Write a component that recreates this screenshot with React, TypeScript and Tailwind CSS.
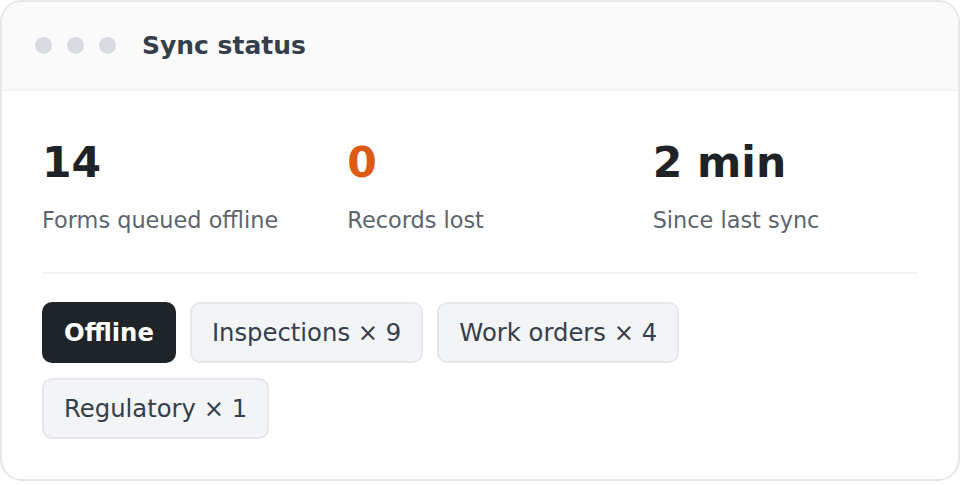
const stats = [
  { value: "14", label: "Forms queued offline", tone: "text-[#1f2328]" },
  { value: "0", label: "Records lost", tone: "text-[#dc5a14]" },
  { value: "2 min", label: "Since last sync", tone: "text-[#1f2328]" },
];

const chips = ["Inspections × 9", "Work orders × 4", "Regulatory × 1"];

export default function App() {
  return (
    <div className="min-h-screen bg-white" style={{ fontFamily: '"DejaVu Sans", sans-serif' }}>
      <div className="overflow-hidden rounded-[22px] border-2 border-[#e5e7eb] bg-white">
        <div className="flex h-[89px] items-center border-b-2 border-[#f1f2f3] bg-[#fafafa] pl-[33px]">
          <div className="flex gap-[15px]">
            <span className="h-[17px] w-[17px] rounded-full bg-[#d8dce1]" />
            <span className="h-[17px] w-[17px] rounded-full bg-[#d8dce1]" />
            <span className="h-[17px] w-[17px] rounded-full bg-[#d8dce1]" />
          </div>
          <h1 className="ml-[26px] text-[25px] font-bold text-[#353e4b]">Sync status</h1>
        </div>

        <div className="px-10 pt-[51px] pb-10">
          <div className="grid grid-cols-3 gap-10 border-b-2 border-[#f3f4f6] pb-[35px]">
            {stats.map(s => (
              <div key={s.label}>
                <div className={`text-[42.5px] font-bold leading-none ${s.tone}`}>{s.value}</div>
                <div className="mt-[19px] text-[22.4px] leading-[33px] text-[#5c6470]">{s.label}</div>
              </div>
            ))}
          </div>

          <div className="mt-[28px] flex flex-wrap gap-x-[14px] gap-y-[15px]">
            <span className="rounded-[10px] border-2 border-[#1f2429] bg-[#1f2429] px-5 py-[14px] text-[24.3px] font-bold leading-[29px] text-white">
              Offline
            </span>
            {chips.map(c => (
              <span
                key={c}
                className="rounded-[10px] border-2 border-[#e5e7eb] bg-[#f3f4f6] px-5 py-[14px] text-[24.3px] leading-[29px] text-[#353e4b]"
              >
                {c}
              </span>
            ))}
          </div>
        </div>
      </div>
    </div>
  );
}
